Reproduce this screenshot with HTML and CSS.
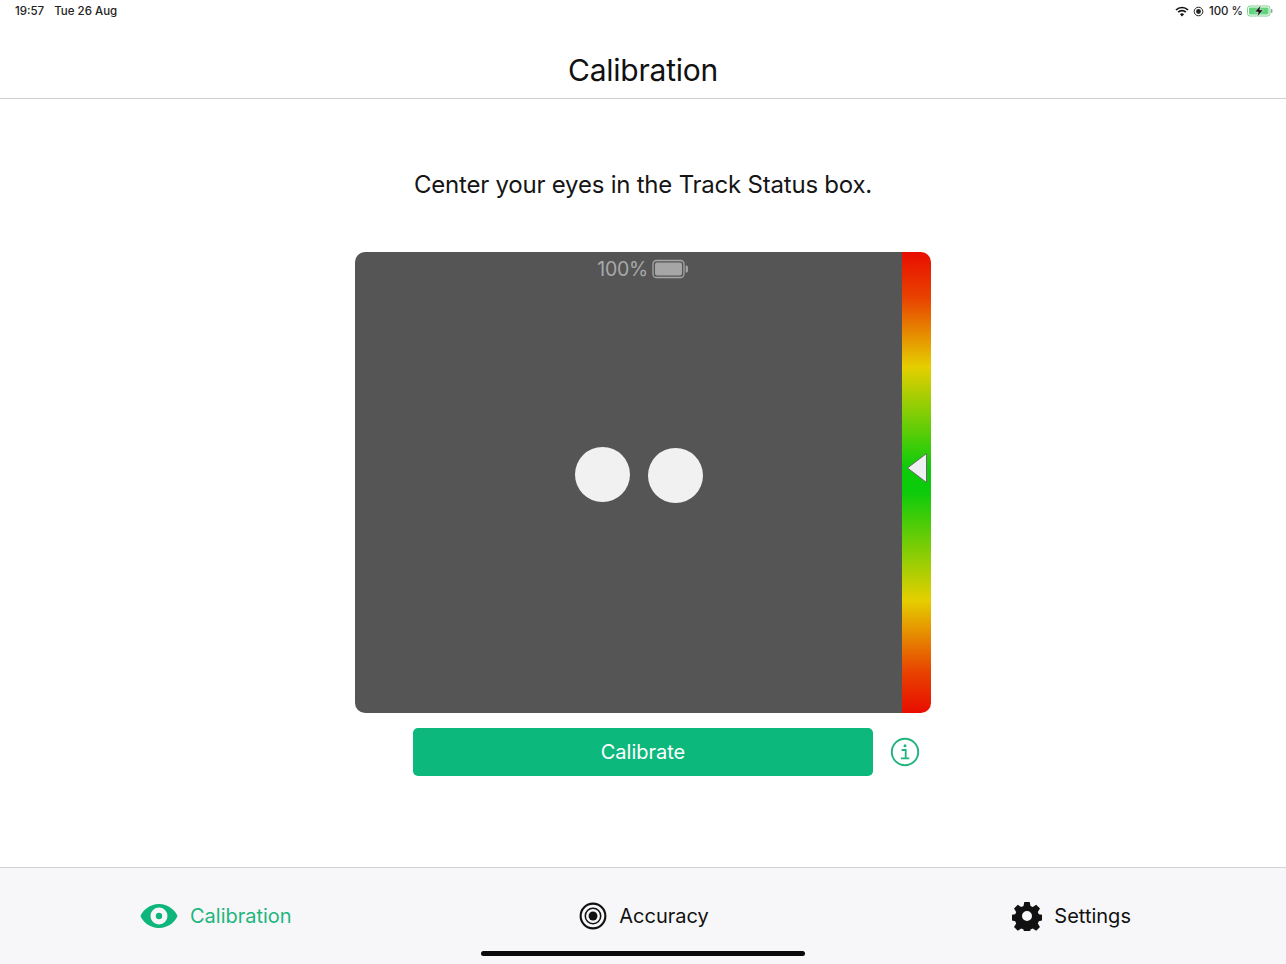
FILE: index.html
```html
<!DOCTYPE html>
<html lang="en">
<head>
<meta charset="utf-8">
<title>Calibration</title>
<link rel="stylesheet" href="styles.css">
</head>
<body>
<div class="app">
  <div class="status">
    <div class="status-left"><span>19:57</span><span>Tue 26 Aug</span></div>
    <div class="status-right">
      <svg class="wifi" width="14" height="11" viewBox="0 0 14 11"><path d="M1 4a8.500 8.500 0 0 1 12 0" fill="none" stroke="#111" stroke-width="1.700"/><path d="M3.200 6.200a5.300 5.300 0 0 1 7.600 0" fill="none" stroke="#111" stroke-width="1.700"/><path d="M7 10.600 4.900 8.200a3 3 0 0 1 4.200 0z" fill="#111"/></svg>
      <svg class="lock" width="11" height="11" viewBox="0 0 11 11"><circle cx="5.500" cy="5.500" r="4.300" fill="none" stroke="#222" stroke-width="1"/><circle cx="5.500" cy="5.500" r="2.400" fill="#222"/></svg>
      <span class="pct">100 %</span>
      <svg class="batt" width="26" height="12" viewBox="0 0 26 12"><rect x="0.500" y="1" width="22.500" height="10" rx="2.500" fill="#fff" stroke="#7fcf8f"/><rect x="2" y="2.500" width="19.500" height="7" rx="1" fill="#5fd67a"/><rect x="24" y="4" width="1.400" height="4" rx="0.700" fill="#999"/><path d="M14 0 7.500 7h3.700L10 12l6.500-7.200h-3.700z" fill="#111" stroke="#fff" stroke-width="0.600"/></svg>
    </div>
  </div>
  <header class="nav"><h1>Calibration</h1></header>
  <main class="main">
    <p class="prompt">Center your eyes in the Track Status box.</p>
    <section class="tracker">
      <div class="viewport">
        <div class="device">
          <span>100%</span>
          <svg width="37" height="20" viewBox="0 0 37 20"><rect x="1" y="1.500" width="31" height="17" rx="3.500" fill="none" stroke="#a6a6a6" stroke-width="1.300"/><rect x="3" y="3.500" width="27" height="13" rx="2" fill="#a6a6a6"/><path d="M33.700 6.500h.6a1.600 1.600 0 0 1 1.600 1.600v3.800a1.600 1.600 0 0 1-1.600 1.600h-.6z" fill="#a6a6a6"/></svg>
        </div>
        <div class="eye eye-left"></div>
        <div class="eye eye-right"></div>
      </div>
      <div class="strip">
        <svg class="marker" width="22" height="32" viewBox="0 0 22 32"><path d="M1.500 16 20.500 1.500v29z" fill="#eef0f3" stroke="#6a6a6a" stroke-width="1"/></svg>
      </div>
    </section>
    <div class="actions">
      <button class="calibrate" type="button">Calibrate</button>
      <svg class="info" width="30" height="30" viewBox="0 0 30 30"><circle cx="15" cy="15" r="13.200" fill="none" stroke="#1fb57d" stroke-width="1.900"/><circle cx="15" cy="8.700" r="1.500" fill="#1fb57d"/><path d="M11.600 13h4.100v8.200M10.900 21.400h8.400" fill="none" stroke="#1fb57d" stroke-width="1.800"/></svg>
    </div>
  </main>
  <nav class="tabs">
    <div class="tab tab-active">
      <svg width="38" height="26" viewBox="0 0 38 26"><path fill-rule="evenodd" d="M19 1C29 1 35.500 8 37.500 13 35.500 18 29 25 19 25S2.500 18 .5 13C2.500 8 9 1 19 1zm0 3.500a8.500 8.500 0 1 0 0 17 8.500 8.500 0 0 0 0-17zm0 5.300a3.200 3.200 0 1 1 0 6.400 3.200 3.200 0 0 1 0-6.400z" fill="#0fb67c"/></svg>
      <span>Calibration</span>
    </div>
    <div class="tab tab-target">
      <svg width="28" height="28" viewBox="0 0 29 29"><circle cx="14.500" cy="14.500" r="12.800" fill="none" stroke="#111" stroke-width="2.200"/><circle cx="14.500" cy="14.500" r="8" fill="none" stroke="#111" stroke-width="1.600"/><circle cx="14.500" cy="14.500" r="4.600" fill="#111"/></svg>
      <span>Accuracy</span>
    </div>
    <div class="tab">
      <svg width="30" height="30" viewBox="0 0 30 30"><path fill-rule="evenodd" d="M12.300 1h5.400l.8 3.900 2.300 1 3.400-2.200 3.800 3.800-2.200 3.400 1 2.300 3.900.8v5.400l-3.900.8-1 2.300 2.200 3.400-3.800 3.800-3.400-2.200-2.300 1-.8 3.500h-5.400l-.8-3.500-2.300-1-3.400 2.200-3.800-3.800 2.200-3.400-1-2.300-3.900-.8v-5.400l3.900-.8 1-2.300-2.200-3.400 3.800-3.800 3.400 2.200 2.300-1zM15 10a5 5 0 1 0 0 10 5 5 0 0 0 0-10z" fill="#111"/></svg>
      <span>Settings</span>
    </div>
    <div class="home"></div>
  </nav>
</div>
</body>
</html>
```
FILE: styles.css
```css
* { box-sizing: border-box; }
html, body { margin: 0; padding: 0; background: #fff; }
body { font-family: Inter, "Liberation Sans", sans-serif; color: #111; }
.app { width: 1286px; height: 964px; display: flex; flex-direction: column; overflow: hidden; }

.status { height: 22px; padding: 0 13px 0 15px; display: flex; justify-content: space-between; align-items: center; font-size: 11.500px; font-weight: 500; color: #222; }
.status-left { display: flex; gap: 10px; }
.status-right { display: flex; align-items: center; }
.lock { margin-left: 4px; }
.pct { margin-left: 5px; }
.batt { margin-left: 4px; }

.nav { height: 77px; padding-top: 19px; border-bottom: 1px solid #cfcfd2; display: flex; align-items: center; justify-content: center; }
.nav h1 { margin: 0; font-size: 30px; font-weight: 400; letter-spacing: -0.230px; color: #111; }

.main { flex: 1; display: flex; flex-direction: column; align-items: center; }
.prompt { margin: 71px 0 0; height: 30px; line-height: 30px; font-size: 24px; font-weight: 400; letter-spacing: -0.220px; color: #151515; }

.tracker { margin-top: 52px; width: 576px; height: 461px; display: flex; border-radius: 10px; overflow: hidden; }
.viewport { position: relative; flex: 1; background: #555; }
.device { display: flex; justify-content: center; align-items: center; gap: 4px; height: 34px; padding-left: 29px; color: #a8a8a8; font-size: 19.500px; }
.device span { letter-spacing: -0.300px; }
.eye { position: absolute; width: 55px; height: 55px; border-radius: 50%; background: #f1f1f1; }
.eye-left { left: 220px; top: 195px; }
.eye-right { left: 293px; top: 196px; }

.strip { position: relative; width: 29px; background: linear-gradient(to bottom, #e90d00 0%, #e84300 10%, #e5cf00 25%, #0ccb0b 47%, #0ccb0b 52%, #e5cf00 75.500%, #e84300 91%, #e90d00 100%); }
.marker { position: absolute; left: 4px; top: 200px; }

.actions { position: relative; margin-top: 15px; width: 460px; height: 48px; }
.calibrate { display: block; width: 100%; height: 100%; border: 0; border-radius: 5px; background: #0cb87c; color: #fff; font-family: inherit; font-size: 20px; font-weight: 400; padding: 0; }
.info { position: absolute; left: 477px; top: 9px; }

.tabs { position: relative; height: 97px; border-top: 1px solid #d2d2d4; background: #f7f7f9; display: grid; grid-template-columns: repeat(3, 1fr); }
.tab { display: flex; align-items: center; justify-content: center; gap: 12px; height: 96px; font-size: 20px; color: #111; }
.tab-active { color: #1fb57d; padding-left: 3px; }
.tab-target { padding-left: 2px; }
.home { position: absolute; left: 481px; bottom: 8px; width: 324px; height: 5px; border-radius: 3px; background: #0a0a0a; }
```
